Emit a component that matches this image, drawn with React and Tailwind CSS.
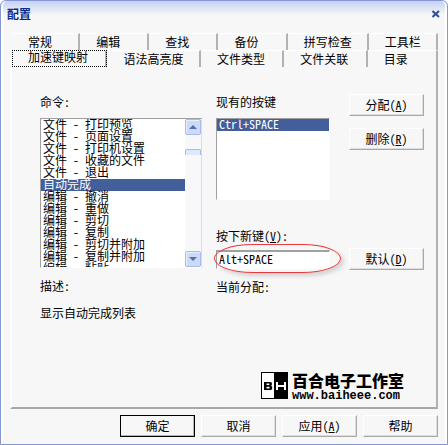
import { useState } from 'react'
import clsx from 'clsx'

const TAB_ROW_TOP = ['常规', '编辑', '查找', '备份', '拼写检查', '工具栏']
const TAB_ROW_BOTTOM = ['加速键映射', '语法高亮度', '文件类型', '文件关联', '目录']

const COMMANDS = [
  '文件 - 打印预览',
  '文件 - 页面设置',
  '文件 - 打印机设置',
  '文件 - 收藏的文件',
  '文件 - 退出',
  '自动完成',
  '编辑 - 撤消',
  '编辑 - 重做',
  '编辑 - 剪切',
  '编辑 - 复制',
  '编辑 - 剪切并附加',
  '编辑 - 复制并附加',
  '编辑 - 粘贴',
]

const optionClass =
  'flex items-center min-h-0 h-3 px-[2px] pt-0 pb-1 leading-[12px] checked:bg-[linear-gradient(#435f9b,#435f9b)] checked:[-webkit-text-fill-color:#ffffff]'

const DialogButton = ({ children, hotkey, isDefault }) => (
  <button
    type="button"
    className={clsx(
      'h-[22px] w-[75px] shrink-0 bg-[#f7f7f7] leading-[12px] whitespace-nowrap',
      isDefault
        ? 'border border-black shadow-[inset_-1px_-1px_0_#b4b4b4]'
        : 'border border-t-white border-l-white border-r-[#a8a8a8] border-b-[#a8a8a8] shadow-[inset_-1px_-1px_0_#dedede]'
    )}
  >
    {children}
    {hotkey && <>(<u>{hotkey}</u>)</>}
  </button>
)

const Tab = ({ label, active, onSelect }) => (
  <button
    type="button"
    role="tab"
    aria-selected={active}
    onClick={() => onSelect(label)}
    className={clsx(
      'h-[17px] border-t border-t-white border-r-2 border-r-[#b2b2b2] pl-4 text-left leading-[12px] whitespace-nowrap',
      active && 'pb-1 outline-1 -outline-offset-1 outline-dotted outline-black'
    )}
  >
    {label}
  </button>
)

const ScrollArrow = ({ up }) => (
  <button
    type="button"
    aria-label={up ? '向上滚动' : '向下滚动'}
    className="flex h-4 w-4 items-center justify-center rounded-[2px] border border-[#a9bbea] bg-[#cbd9fb] shadow-[inset_1px_1px_0_#e8effe]"
  >
    <svg width="8" height="4" viewBox="0 0 8 4" fill="#5770a8">
      <path d={up ? 'M0 4 L4 0 L8 4 Z' : 'M0 0 L4 4 L8 0 Z'} />
    </svg>
  </button>
)

const StudioLogo = () => (
  <div className="flex items-start gap-1 text-black">
    <svg width="27" height="27" viewBox="0 0 27 27" aria-hidden="true">
      <rect x="0.5" y="0.5" width="26" height="26" fill="#fff" stroke="#000" />
      <rect x="13" y="0" width="14" height="27" fill="#000" />
      <path d="M3 10h6.5q1.5 0 1.5 2 0 1.3-1 1.8 1.3.5 1.3 2 0 2.2-1.8 2.2H3z M5.5 11.6v1.4h2.8v-1.4z M5.5 14.8v1.6h3v-1.6z" fill="#000" fillRule="evenodd" />
      <path d="M16 10v8M24 10v8M16 14h8" fill="none" stroke="#fff" strokeWidth="2" />
    </svg>
    <div>
      <p className="text-[16px] leading-[16px] font-black">百合电子工作室</p>
      <p className="mt-[2px] font-['Liberation_Mono',monospace] text-[12px] leading-[12px] font-bold">www.baiheee.com</p>
    </div>
  </div>
)

export default function App() {
  const [tab, setTab] = useState('加速键映射')
  const [command, setCommand] = useState('自动完成')
  const [newKey, setNewKey] = useState('Alt+SPACE')

  return (
    <div className="rounded-t-[6px] border border-[#8496d6] bg-[#f7f7f7] bg-[linear-gradient(#c3d0f2,#f7f7f7)] bg-[length:100%_14px] bg-no-repeat font-['Noto_Sans_CJK_SC',sans-serif] text-[12px] leading-[12px] text-black shadow-[inset_2px_0_0_#ffffff,inset_-2px_0_0_#ffffff] [font-feature-settings:'hwid']">
      {/* Title bar */}
      <header className="flex h-8 items-start justify-between px-[6px] pt-[7px]">
        <h1 className="font-bold text-[#0b2a8c]">配置</h1>
        <button type="button" aria-label="关闭" className="mt-[2px] mr-[1px]">
          <svg width="8" height="8" viewBox="0 0 8 8" stroke="#2f4c9c" strokeWidth="2">
            <path d="M0.5 1 L7 7 M7 1 L0.5 7" />
          </svg>
        </button>
      </header>

      <main className="mx-[9px]">
        {/* Tabs */}
        <div role="tablist" className="ml-[2px]">
          <div className="grid grid-cols-[68fr_69fr_69fr_69fr_81fr_69fr]">
            {TAB_ROW_TOP.map((t) => (
              <Tab key={t} label={t} active={t === tab} onSelect={setTab} />
            ))}
          </div>
          <div className="grid grid-cols-[95fr_93fr_83fr_83fr_70fr]">
            {TAB_ROW_BOTTOM.map((t) => (
              <Tab key={t} label={t} active={t === tab} onSelect={setTab} />
            ))}
          </div>
        </div>

        <section className="border-r-2 border-b-2 border-l-2 border-r-[#b2b2b2] border-b-[#a8a8a8] border-l-white pt-[27px] pr-3 pb-[5px] pl-7">
          <div className="flex">
            {/* Commands */}
            <div className="flex flex-1 flex-col">
              <label htmlFor="commands" className="mt-[2px]">命令:</label>
              <div className="mt-[10px] flex h-[150px] border border-t-[#a0a0a0] border-r-[#dcdcdc] border-b-white border-l-[#a0a0a0] bg-white">
                <select
                  id="commands"
                  size={13}
                  value={command}
                  onChange={(e) => setCommand(e.target.value)}
                  className="h-full min-w-0 flex-1 overflow-hidden bg-white p-0 outline-none"
                >
                  {COMMANDS.map((c) => (
                    <option key={c} value={c} className={optionClass}>{c}</option>
                  ))}
                </select>
                <div className="flex w-4 flex-col justify-between bg-[#f8f8fb]">
                  <ScrollArrow up />
                  <div className="mb-[82px] h-[6px] rounded-t-[2px] border border-b-0 border-[#a9bbea] bg-[#dfe8fc]" />
                  <ScrollArrow />
                </div>
              </div>
              <h2 className="mt-3">描述:</h2>
              <p className="mt-[15px]">显示自动完成列表</p>
            </div>

            {/* Key bindings */}
            <div className="ml-[14px] flex w-[114px] flex-col">
              <label htmlFor="keys" className="mt-[2px]">现有的按键</label>
              <select
                id="keys"
                size={6}
                defaultValue="Ctrl+SPACE"
                className="mt-[10px] h-[82px] overflow-hidden border border-t-[#a0a0a0] border-r-white border-b-white border-l-[#a0a0a0] bg-white p-0 outline-none"
              >
                <option className={optionClass}>Ctrl+SPACE</option>
              </select>
              <label htmlFor="new-key" className="mt-[30px]">按下新键(<u>V</u>):</label>
              <div className="relative mt-2">
                <input
                  id="new-key"
                  value={newKey}
                  onChange={(e) => setNewKey(e.target.value)}
                  className="block h-[19px] w-full border border-t-2 border-t-[#a0a0a0] border-r-white border-b-white border-l-[#a0a0a0] bg-white px-[2px] pb-1 leading-[12px] outline-none"
                />
                {/* Highlight ring */}
                <div className="pointer-events-none absolute -top-[6px] -right-[11px] -bottom-[4px] -left-[2px] rounded-[40px/15px] border border-[#e83a3a] shadow-[3px_3px_4px_#00000026]" />
              </div>
              <p className="mt-3">当前分配:</p>
            </div>

            {/* Actions */}
            <div className="ml-[19px] flex flex-col">
              <DialogButton hotkey="A">分配</DialogButton>
              <div className="mt-3 flex">
                <DialogButton hotkey="R">删除</DialogButton>
              </div>
              <div className="mt-[98px] flex">
                <DialogButton hotkey="D">默认</DialogButton>
              </div>
            </div>
          </div>

          <div className="mt-[53px] mr-5 flex justify-end">
            <StudioLogo />
          </div>
        </section>
      </main>

      <footer className="flex justify-end gap-[6px] px-[9px] pt-[6px] pb-[7px]">
        <DialogButton isDefault>确定</DialogButton>
        <DialogButton>取消</DialogButton>
        <DialogButton hotkey="A">应用</DialogButton>
        <DialogButton>帮助</DialogButton>
      </footer>
    </div>
  )
}
